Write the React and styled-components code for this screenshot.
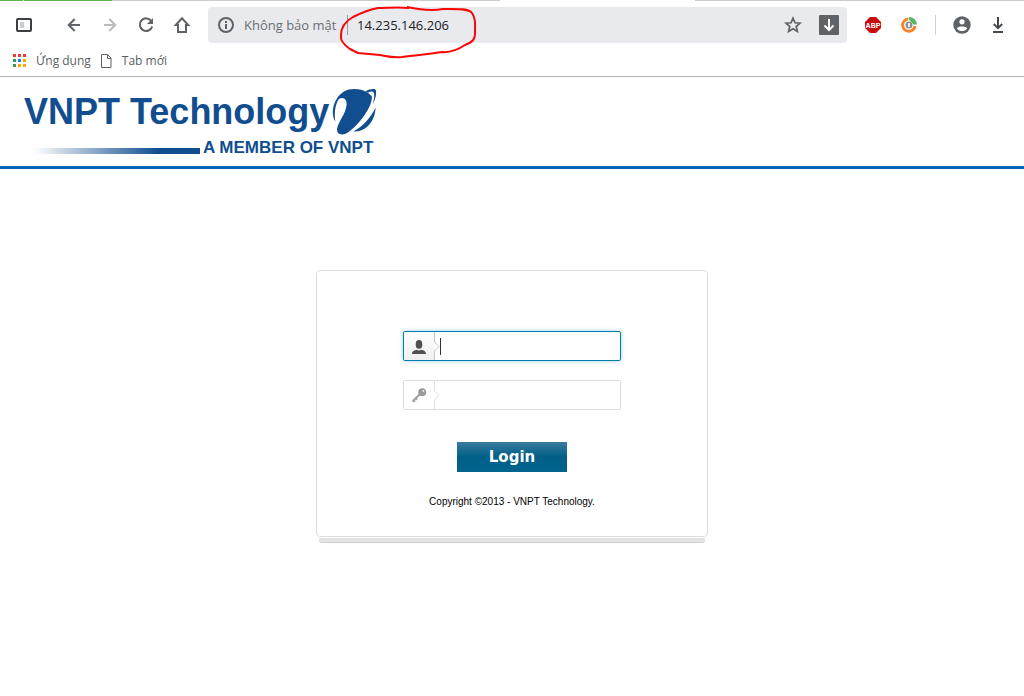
import React, { useState } from "react";
import styled, { createGlobalStyle } from "styled-components";

const GlobalStyle = createGlobalStyle`
  * {
    box-sizing: border-box;
  }
  body {
    margin: 0;
    background: #fff;
    font-family: "Liberation Sans", Arial, sans-serif;
  }
`;

const TabStrip = styled.div`
  display: flex;
  height: 1px;
`;

const TabEdge = styled.div`
  flex: ${(p) => (p.$size ? `0 0 ${p.$size}px` : "1")};
  background: ${(p) => p.$color};
`;

const Toolbar = styled.div`
  display: flex;
  align-items: center;
  padding: 6px 8px 6px 6px;
`;

const IconButton = styled.button`
  display: flex;
  align-items: center;
  justify-content: center;
  flex: none;
  width: 36px;
  height: 36px;
  padding: 0;
  border: none;
  background: none;
  cursor: pointer;
`;

const NavGroup = styled.div`
  display: flex;
  margin: 0 8px 0 14px;
`;

const AddressBar = styled.div`
  position: relative;
  display: flex;
  align-items: center;
  flex: 1;
  min-width: 0;
  height: 36px;
  margin-right: 8px;
  border-radius: 4px;
  background: #e8eaed;
  font-family: "Open Sans", "Noto Sans", sans-serif;
  font-size: 13px;
  line-height: 20px;
`;

const SecurityLabel = styled.span`
  flex: none;
  width: 103px;
  color: #6b6f73;
  white-space: nowrap;
`;

const AddressDivider = styled.span`
  width: 1px;
  height: 20px;
  margin-right: 9px;
  background: #9a9da1;
`;

const AddressInput = styled.input`
  flex: 1;
  min-width: 0;
  padding: 0;
  border: none;
  outline: none;
  background: transparent;
  color: #202124;
  font: inherit;
`;

const RedMark = styled.svg`
  position: absolute;
  left: 131px;
  top: 0;
  overflow: visible;
  pointer-events: none;
`;

const ToolbarDivider = styled.span`
  width: 1px;
  height: 20px;
  margin: 0 8px;
  background: #cfd1d4;
`;

const Bookmarks = styled.nav`
  display: flex;
  align-items: center;
  gap: 10px;
  height: 28px;
  padding: 0 13px 4px;
  border-bottom: 1px solid #b4b4b4;
`;

const Bookmark = styled.a`
  display: flex;
  align-items: center;
  gap: 10px;
  color: #5a5d61;
  font-family: "Open Sans", "Noto Sans", sans-serif;
  font-size: 12px;
  line-height: 20px;
  text-decoration: none;
`;

const Header = styled.header`
  padding: 12px 24px 8px;
  border-bottom: 3px solid #0066b3;
`;

const Logo = styled.div`
  display: flex;
  flex-direction: column;
  gap: 2px;
  width: 353px;
  color: #104e90;
  font-weight: bold;
`;

const LogoTop = styled.div`
  display: flex;
  align-items: flex-start;
  justify-content: space-between;
`;

const LogoName = styled.span`
  font-size: 36px;
  line-height: 45px;
  white-space: nowrap;
`;

const LogoBottom = styled.div`
  display: flex;
  align-items: center;
  gap: 3px;
  height: 21px;
  padding-left: 10px;
  font-size: 17px;
  line-height: 21px;
  white-space: nowrap;
`;

const LogoBar = styled.span`
  width: 166px;
  height: 6px;
  margin-top: 6px;
  background: linear-gradient(to right, #fff, #104e90 75%);
`;

const Main = styled.main`
  display: flex;
  justify-content: center;
  padding: 101px 16px 40px;
`;

const CardStack = styled.div`
  width: 100%;
  max-width: 392px;
`;

const Card = styled.form`
  display: flex;
  flex-direction: column;
  align-items: center;
  padding: 60px 16px 25px;
  border: 1px solid #dcdcdc;
  border-radius: 4px;
  background: #fff;
`;

const CardEdge = styled.div`
  height: ${(p) => p.$height}px;
  margin: 0 ${(p) => p.$inset}px;
  border-bottom: 1px solid ${(p) => p.$line};
  border-radius: 0 0 3px 3px;
  background: ${(p) => p.$fill};
`;

const Field = styled.label`
  display: flex;
  width: 218px;
  height: 30px;
  margin-bottom: ${(p) => p.$space}px;
  overflow: hidden;
  border: 1px solid ${(p) => (p.$active ? "#007bab" : "#dcdcdc")};
  border-radius: 2px;
  background: #fff;
  box-shadow: ${(p) => (p.$active ? "0 0 4px #8fd3ee" : "none")};
`;

const FieldIcon = styled.span`
  display: flex;
  align-items: center;
  justify-content: center;
  flex: none;
  width: 30px;
  padding-top: 2px;
  background: ${(p) => (p.$active ? "linear-gradient(#fff, #f0f0f0)" : "#fff")};
`;

const Caret = styled.span`
  flex: none;
  align-self: center;
  width: 1px;
  height: 17px;
  background: #333;
`;

const FieldInput = styled.input`
  flex: 1;
  min-width: 0;
  padding: 0 6px 0 0;
  border: none;
  outline: none;
  background: transparent;
  font-size: 13px;
  caret-color: ${(p) => (p.value ? "#333" : "transparent")};
`;

const LoginButton = styled.button`
  width: 110px;
  height: 30px;
  margin-bottom: 21px;
  padding: 0;
  border: none;
  background: linear-gradient(#397b9e, #005f87 50%, #00648d);
  color: #fff;
  font-family: "DejaVu Sans", Verdana, sans-serif;
  font-size: 15px;
  font-weight: bold;
  line-height: 30px;
  cursor: pointer;
`;

const Copyright = styled.p`
  margin: 0;
  color: #000;
  font-size: 10px;
  line-height: 18px;
`;

const APP_COLORS = [
  "#f03a37", "#f03a37", "#f03a37",
  "#2f9e5b", "#1a80f0", "#fbab00",
  "#2f9e5b", "#fbab00", "#fbab00",
];

function Icon({ size = 18, children, color = "#5f6368", width = 2 }) {
  return (
    <svg width={size} height={size} viewBox={`0 0 ${size} ${size}`} fill="none" stroke={color} strokeWidth={width} aria-hidden="true">
      {children}
    </svg>
  );
}

function Planet() {
  return (
    <svg width="45" height="46" viewBox="0 0 45 46" fill="#104e90" aria-hidden="true">
      <path d="M5 9.5C9 3 15 0 22 0C28 0 33 1.5 36.5 4.2L39.8 7.2C40.6 13 36 22 30 29.5C25 36 19 42 14 44.5C9 46.5 5 45 5 41C5 36 10 29 12.5 23.5C15 17 15.5 12 12.5 9.7C10.5 8.4 7.5 9 5 11Z" />
      <path d="M7.5 6.5C1 13 -1.5 25 3.3 32.8C2 24 3 15 7.5 9Z" />
      <path d="M33.5 2.2C37.5.2 42.5-.8 43.8 1C44.8 4 43.5 10 40.8 15.5C42 10 43 4.5 41.2 3C40 2 38 2.7 36 3.8Z" />
      <path d="M43.5 18.5C43.5 25 41 32 36 37C32 41 26.5 42.8 21.5 42.6C31 37 39 28.5 43.5 18.5Z" />
    </svg>
  );
}

function Notch({ color }) {
  return (
    <svg width="6" height="28" viewBox="0 0 6 28" fill="none" stroke={color} aria-hidden="true">
      <path d="M.5 0V10L5 14.5L.5 19V28" />
    </svg>
  );
}

function UserIcon() {
  return (
    <svg width="14" height="14" viewBox="0 0 14 14" fill="#505050" aria-hidden="true">
      <ellipse cx="7" cy="4.4" rx="3.3" ry="4.3" />
      <path d="M0 14C0 11.2 2.3 10.4 5 9.8Q7 11.4 9 9.8C11.7 10.4 14 11.2 14 14Z" />
    </svg>
  );
}

function KeyIcon() {
  return (
    <svg width="16" height="16" viewBox="0 0 16 16" aria-hidden="true">
      <path d="M8.5 6.5L1.5 13.5M2.5 12.5L3.8 13.8M4.8 10.5L6 11.7" stroke="#a2a2a2" strokeWidth="2.2" fill="none" />
      <circle cx="11.2" cy="4.2" r="3.9" fill="#999" />
      <circle cx="12.4" cy="3.1" r="1" fill="#eee" />
    </svg>
  );
}

function Browser() {
  const [address, setAddress] = useState("14.235.146.206");

  return (
    <>
      <TabStrip>
        <TabEdge $size={23} $color="#57b947" />
        <TabEdge $size={1} $color="#fff" />
        <TabEdge $size={88} $color="#57b947" />
        <TabEdge $size={388} $color="#ccc" />
        <TabEdge $size={195} $color="#fff" />
        <TabEdge $color="#ccc" />
      </TabStrip>
      <Toolbar>
        <IconButton aria-label="Side panel">
          <Icon color="#3c4043">
            <rect x="2" y="3" width="14" height="12" rx="1" />
            <path d="M7 6V12" stroke="#ccc" strokeWidth="4" />
          </Icon>
        </IconButton>
        <NavGroup>
          <IconButton aria-label="Back">
            <Icon><path d="M15 9H4M9.7 3L3.7 9L9.7 15" /></Icon>
          </IconButton>
          <IconButton aria-label="Forward">
            <Icon color="#babcbe"><path d="M3 9H14M8.3 3L14.3 9L8.3 15" /></Icon>
          </IconButton>
          <IconButton aria-label="Reload">
            <Icon>
              <path d="M14.5 5.3A6.3 6.3 0 1 0 15.2 10.5" />
              <path d="M16 2V8H10Z" fill="#5f6368" stroke="none" />
            </Icon>
          </IconButton>
          <IconButton aria-label="Home">
            <Icon><path d="M9 2.3L2.8 9H5V16H13V9H15.2Z" /></Icon>
          </IconButton>
        </NavGroup>
        <AddressBar>
          <IconButton aria-label="Site information">
            <Icon>
              <circle cx="9" cy="9" r="7" />
              <path d="M9 8V13M9 5V7" />
            </Icon>
          </IconButton>
          <SecurityLabel>Không bảo mật</SecurityLabel>
          <AddressDivider />
          <AddressInput aria-label="Address" value={address} onChange={(e) => setAddress(e.target.value)} />
          <IconButton aria-label="Bookmark this page">
            <Icon width={1.7}>
              <path d="M9 2.2L11 6.8L16 7.2L12.2 10.5L13.4 15.4L9 12.8L4.6 15.4L5.8 10.5L2 7.2L7 6.8Z" />
            </Icon>
          </IconButton>
          <IconButton aria-label="Save page">
            <Icon size={20} color="#fff">
              <rect width="20" height="20" rx="1" fill="#5f6368" stroke="none" />
              <path d="M10 4V15M5.5 10.5L10 15L14.5 10.5" />
            </Icon>
          </IconButton>
          <RedMark width="140" height="54" viewBox="0 0 140 54" fill="none" stroke="#fb0505" strokeWidth="2" strokeLinejoin="round" aria-hidden="true">
            <path d="M70 1C59 0 48 1 39 1C28 3 20 7 14 10C7 14 2 20 2 28C1 34 5 38 11 42L19 46L41 48C47 49 53 51 63 50C77 48 90 47 103 45C113 46 120 42 126 38C134 35 136 32 136 27C136 18 137 12 133 6C130 1 115 2 104 2C94 4 82 3 68 0" />
          </RedMark>
        </AddressBar>
        <IconButton aria-label="Ad blocker">
          <svg width="16" height="16" viewBox="0 0 16 16" aria-hidden="true">
            <path d="M5 0H11L16 5V11L11 16H5L0 11V5Z" fill="#c70d0d" />
            <text x="8" y="11" fill="#fff" fontFamily="Liberation Sans, sans-serif" fontSize="7" fontWeight="bold" textAnchor="middle">ABP</text>
          </svg>
        </IconButton>
        <IconButton aria-label="Extension">
          <svg width="18" height="18" viewBox="0 0 18 18" fill="none" aria-hidden="true">
            <path d="M8 3A6.2 6.2 0 1 0 15 10" stroke="#fa8128" strokeWidth="3" />
            <path d="M9 1C13 1 16.5 4 17 8.5H13.5L8.5 3Z" fill="#55b65b" />
            <circle cx="9" cy="9" r="3.5" fill="#8b8f94" />
            <path d="M9 7V11" stroke="#eee" strokeWidth="2" />
          </svg>
        </IconButton>
        <ToolbarDivider />
        <IconButton aria-label="Profile">
          <svg width="18" height="18" viewBox="0 0 18 18" aria-hidden="true">
            <circle cx="9" cy="9" r="8.7" fill="#5f6368" />
            <circle cx="9" cy="5.8" r="2.6" fill="#fff" />
            <path d="M3.8 12.2C5 10 13 10 14.2 12.2C12 16 6 16 3.8 12.2Z" fill="#fff" />
          </svg>
        </IconButton>
        <IconButton aria-label="Downloads">
          <Icon color="#46494c">
            <path d="M9 1V12M4.8 8L9 12.2L13.2 8M4 16H14" />
          </Icon>
        </IconButton>
      </Toolbar>
      <Bookmarks aria-label="Bookmarks">
        <Bookmark href="#apps">
          <svg width="13" height="13" viewBox="0 0 13 13" aria-hidden="true">
            {APP_COLORS.map((color, i) => (
              <rect key={i} x={(i % 3) * 5} y={Math.floor(i / 3) * 5} width="3" height="3" fill={color} />
            ))}
          </svg>
          Ứng dụng
        </Bookmark>
        <Bookmark href="#new-tab">
          <svg width="11" height="14" viewBox="0 0 11 14" fill="none" stroke="#5f6368" aria-hidden="true">
            <path d="M.5 .5H6.5L10 4V13.5H.5ZM6.5 .5V4.5H10" />
          </svg>
          Tab mới
        </Bookmark>
      </Bookmarks>
    </>
  );
}

export default function App() {
  const [focused, setFocused] = useState("user");
  const [user, setUser] = useState("");
  const [password, setPassword] = useState("");
  const userActive = focused === "user";
  const passwordActive = focused === "password";

  return (
    <>
      <GlobalStyle />
      <Browser />
      <Header>
        <Logo>
          <LogoTop>
            <LogoName>VNPT Technology</LogoName>
            <Planet />
          </LogoTop>
          <LogoBottom>
            <LogoBar />
            A MEMBER OF VNPT
          </LogoBottom>
        </Logo>
      </Header>
      <Main>
        <CardStack>
          <Card onSubmit={(e) => e.preventDefault()}>
            <Field $active={userActive} $space={19}>
              <FieldIcon $active={userActive}><UserIcon /></FieldIcon>
              <Notch color="#c6c6c6" />
              {userActive && !user && <Caret />}
              <FieldInput
                aria-label="Username"
                autoFocus
                value={user}
                onFocus={() => setFocused("user")}
                onChange={(e) => setUser(e.target.value)}
              />
            </Field>
            <Field $active={passwordActive} $space={32}>
              <FieldIcon $active={passwordActive}><KeyIcon /></FieldIcon>
              <Notch color="#e0e0e0" />
              {passwordActive && !password && <Caret />}
              <FieldInput
                aria-label="Password"
                type="password"
                value={password}
                onFocus={() => setFocused("password")}
                onChange={(e) => setPassword(e.target.value)}
              />
            </Field>
            <LoginButton type="submit">Login</LoginButton>
            <Copyright>Copyright ©2013 - VNPT Technology.</Copyright>
          </Card>
          <CardEdge $height={2} $inset={2} $line="#dedede" $fill="#fff" />
          <CardEdge $height={4} $inset={3} $line="#cfcfcf" $fill="#e4e4e4" />
        </CardStack>
      </Main>
    </>
  );
}
